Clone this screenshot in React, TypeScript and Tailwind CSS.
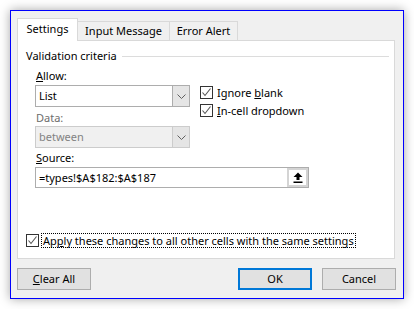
import React from 'react'

function Chevron() {
  return (
    <svg width="9" height="5" viewBox="0 0 9 5" className="block">
      <polyline points="0.5,0.5 4.5,4.5 8.5,0.5" fill="none" stroke="#606060" strokeWidth="1" />
    </svg>
  )
}

function CheckBox() {
  return (
    <div className="flex h-[13px] w-[13px] shrink-0 items-center justify-center border border-[#333333] bg-white">
      <svg width="11" height="11" viewBox="0 0 11 11" className="block">
        <polyline points="1.5,5.5 4,8.5 9.5,1.5" fill="none" stroke="#555555" strokeWidth="1.1" />
      </svg>
    </div>
  )
}

function Combo({ value, disabled }: { value: string; disabled?: boolean }) {
  return (
    <div
      className={
        disabled
          ? 'flex h-[22px] w-[155px] border border-[#cccccc] bg-[#f0f0f0]'
          : 'flex h-[22px] w-[155px] border border-[#adadad] bg-white'
      }
    >
      <div className={disabled ? 'flex-1 pl-[3px] leading-[20px] text-[#838383]' : 'flex-1 pl-[3px] leading-[20px]'}>
        {value}
      </div>
      <div
        className={
          disabled
            ? 'flex w-[17px] items-center justify-center border-l border-[#cccccc] bg-[#e5e5e5]'
            : 'flex w-[17px] items-center justify-center border-l border-[#adadad] bg-[#e5e5e5]'
        }
      >
        <Chevron />
      </div>
    </div>
  )
}

function Button({ children, primary }: { children: React.ReactNode; primary?: boolean }) {
  return (
    <div
      className={
        primary
          ? 'flex h-[22px] w-[74px] items-center justify-center border-2 border-[#0078d7] bg-[#e1e1e1]'
          : 'flex h-[22px] w-[74px] items-center justify-center border border-[#adadad] bg-[#e1e1e1]'
      }
    >
      {children}
    </div>
  )
}

export default function App() {
  return (
    <div
      className="h-[309px] w-[414px] bg-white pl-[10px] pt-[10px] text-[11px] text-black"
      style={{ fontFamily: '"Noto Sans", "Liberation Sans", sans-serif' }}
    >
      <div className="flex h-[289px] w-[394px] flex-col border border-[#0000ff] bg-[#f0f0f0] pl-[6px] pt-[7px] shadow-[0_0_10px_rgba(0,0,0,0.35)]">
        {/* tabs */}
        <div className="relative z-10 -mb-px flex h-[23px] items-end">
          <div className="flex h-[23px] w-[61px] items-center justify-center border border-b-0 border-[#d9d9d9] bg-white pb-px">
            Settings
          </div>
          <div className="flex h-[20px] w-[92px] items-center justify-center border-b border-r border-t border-[#d9d9d9]">
            Input Message
          </div>
          <div className="flex h-[20px] w-[68px] items-center justify-center border-b border-r border-t border-[#d9d9d9]">
            Error Alert
          </div>
        </div>

        {/* panel */}
        <div className="flex h-[219px] w-[378px] flex-col border border-[#d9d9d9] bg-white">
          <div className="mt-[7px] flex h-[16px] items-center pl-[8px] pr-[5px]">
            <span className="leading-[16px]">Validation criteria</span>
            <div className="ml-[5px] h-px flex-1 bg-[#dcdcdc]" />
          </div>

          <div className="ml-[17px] flex">
            <div className="flex w-[155px] flex-col">
              <div className="mt-[4px] h-[16px] pl-px leading-[16px]">
                <span className="underline">A</span>llow:
              </div>
              <div className="mt-px">
                <Combo value="List" />
              </div>
              <div className="mt-[3px] h-[16px] pl-px leading-[16px] text-[#6d6d6d]">Data:</div>
              <Combo value="between" disabled />
            </div>
            <div className="ml-[10px] flex flex-col gap-[5px] pt-[22px]">
              <div className="flex h-[13px] items-center gap-[4px]">
                <CheckBox />
                <span className="leading-[16px]">
                  Ignore <span className="underline">b</span>lank
                </span>
              </div>
              <div className="flex h-[13px] items-center gap-[4px]">
                <CheckBox />
                <span className="leading-[16px]">
                  <span className="underline">I</span>n-cell dropdown
                </span>
              </div>
            </div>
          </div>

          <div className="ml-[17px] mt-[2px] h-[16px] pl-px leading-[16px]">
            <span className="underline">S</span>ource:
          </div>
          <div className="ml-[17px] mt-px flex h-[21px] w-[274px] border border-[#adadad] bg-white">
            <div className="flex-1 pl-[3px] leading-[19px]">=types!$A$182:$A$187</div>
            <div className="flex w-[21px] items-center justify-center border-2 border-[#d4d4d4] bg-white">
              <svg width="10" height="11" viewBox="0 0 10 11" className="block">
                <path d="M5 0.5 L9.5 5 L6.5 5 L6.5 8 L3.5 8 L3.5 5 L0.5 5 Z" fill="#000" />
                <rect x="0.5" y="9.5" width="9" height="1.5" fill="#000" />
              </svg>
            </div>
          </div>

          <div className="mb-[10px] ml-[8px] mt-auto flex items-center gap-[2px]">
            <CheckBox />
            <span className="h-[15px] border border-dotted border-black px-px leading-[13px]">
              Ap<span className="underline">p</span>ly these changes to all other cells with the same settings
            </span>
          </div>
        </div>

        {/* buttons */}
        <div className="mt-[9px] flex w-[379px]">
          <Button>
            <span className="underline">C</span>lear All
          </Button>
          <div className="flex-1" />
          <Button primary>OK</Button>
          <div className="w-[10px]" />
          <Button>Cancel</Button>
        </div>
      </div>
    </div>
  )
}
